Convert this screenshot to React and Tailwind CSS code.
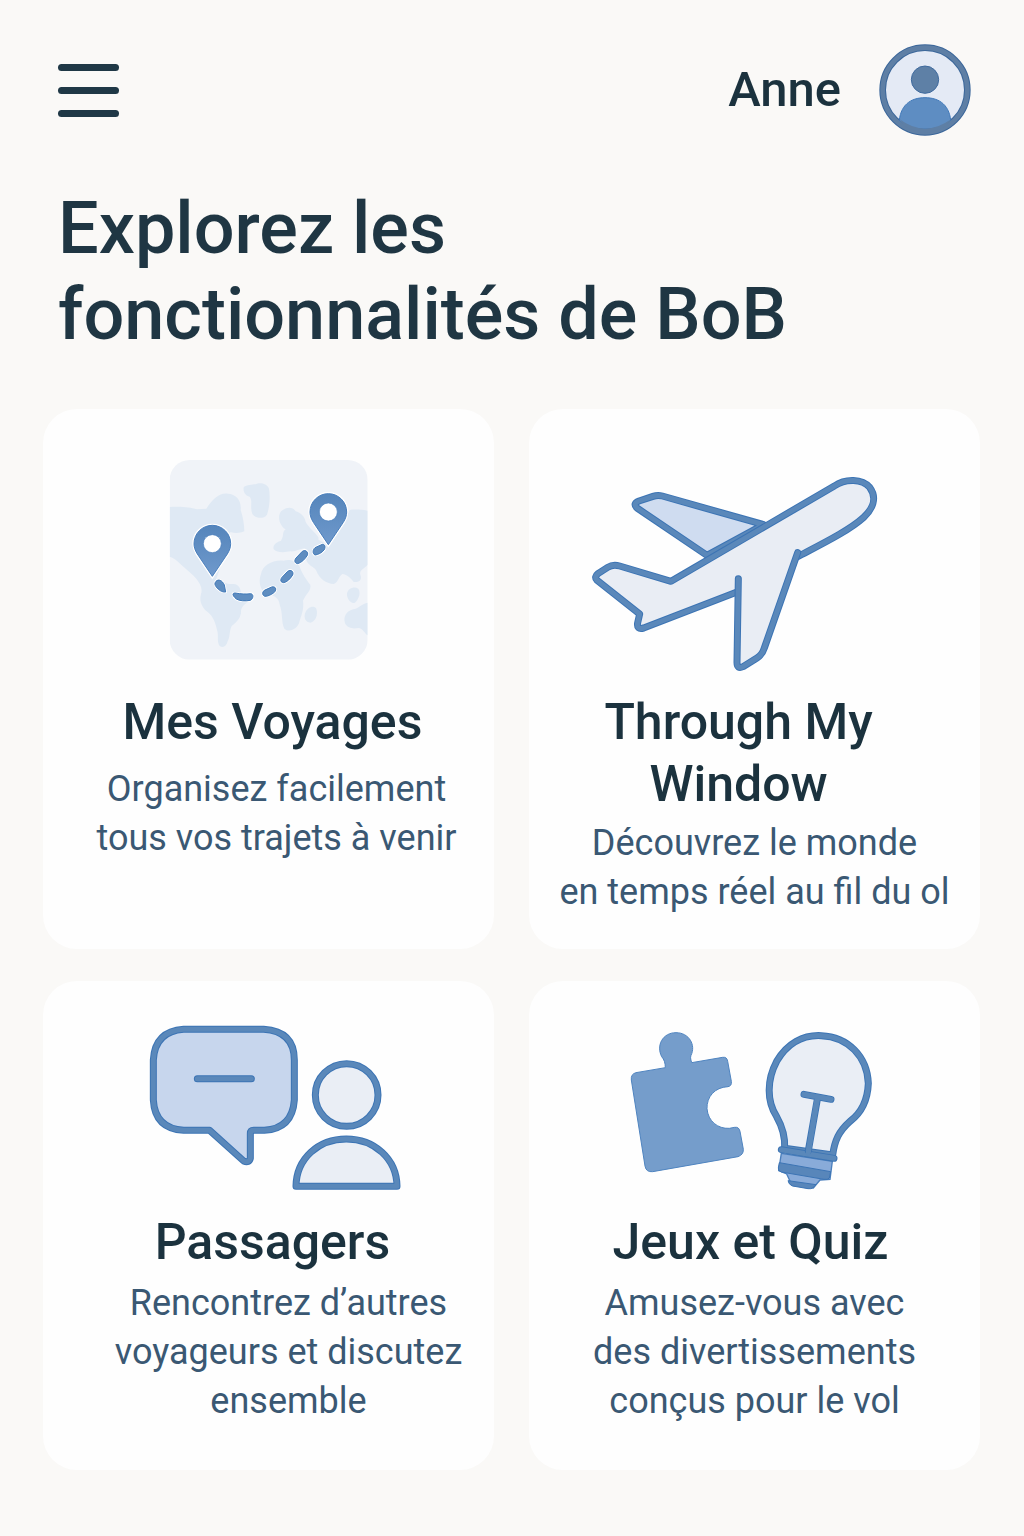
import React from "react";

const EDGE = "#3c74b4";
const CORE = "#5a88ba";

/* Outline with a slightly darker rim, as used by every illustration. */
function Outline({ d, width = 21, fill = "none" }) {
  return (
    <g strokeLinecap="round" strokeLinejoin="round">
      <path d={d} fill={fill} stroke={EDGE} strokeWidth={width} />
      <path d={d} fill="none" stroke={CORE} strokeWidth={width - 6} />
    </g>
  );
}

function Pin({ x, y }) {
  const d =
    "M0 0L-45 -67C-52 -78 -55 -88 -55 -98A55 55 0 1 1 55 -98C55 -88 52 -78 45 -67Z";
  return (
    <g transform={`translate(${x} ${y})`}>
      <path d={d} fill="#fff" stroke="#fff" strokeWidth="10" />
      <path d={d} fill="url(#pinFill)" stroke="#4a7fbd" strokeWidth="3" />
      <circle cy="-98" r="27" fill="#fff" stroke="#4a7fbd" strokeWidth="2" />
    </g>
  );
}

const DASHES = [
  "M169 394C176 386 188 391 194 405L198 426C186 427 177 420 170 411C165 405 164 400 169 394Z",
  "M226 429C244 432 258 433 273 431C283 432 281 447 272 451C256 454 240 453 230 447C219 438 216 429 226 429Z",
  "M314 421L336 411C348 408 352 418 344 427C334 435 324 439 316 439C307 436 307 427 314 421Z",
  "M366 383L384 364C394 357 403 365 399 375C391 388 382 396 372 398C363 397 361 391 366 383Z",
  "M409 324L428 304C438 297 447 307 443 316C435 329 425 338 414 341C405 340 403 332 409 324Z",
  "M466 293L488 283C496 282 498 291 494 299C486 309 475 314 466 315C458 311 459 299 466 293Z",
];

function MapArt({ className }) {
  return (
    <svg viewBox="-182 -3 1020 726" className={className} aria-hidden="true">
      <defs>
        <linearGradient id="pinFill" x1="0" y1="0" x2="0" y2="1">
          <stop offset="0" stopColor="#5585bb" />
          <stop offset="1" stopColor="#6f99cc" />
        </linearGradient>
        <clipPath id="mapClip">
          <rect x="30" y="30" width="594" height="599" rx="60" />
        </clipPath>
      </defs>
      <g clipPath="url(#mapClip)">
        <rect x="30" y="30" width="594" height="599" fill="#f0f3f8" />
        <g fill="#dfe9f4">
          <path d="M30 171C70 169 90 172 112 178L140 176C158 150 176 128 204 131C230 132 246 152 243 180C250 200 254 225 254 244C240 250 225 250 212 246L200 300L168 392C190 392 200 404 220 402C238 400 246 420 244 440C262 440 276 444 272 452C256 460 242 470 244 490C240 510 226 520 216 528C208 544 212 560 204 574C200 590 190 594 180 588C170 574 178 556 172 540C168 520 160 498 144 486C126 472 118 452 124 432C130 415 120 398 108 384C92 366 70 350 58 338C48 328 38 322 30 320Z" />
          <path d="M252 112C262 102 280 106 292 101C306 98 322 102 328 116C332 140 330 170 322 194C312 208 288 206 278 192C270 170 280 152 270 140C258 136 250 128 252 112Z" />
          <path d="M364 184C378 172 398 168 408 184C420 186 436 200 438 216C446 232 470 250 476 262C480 280 460 300 446 296C430 290 410 306 392 304C374 308 350 308 342 298C338 284 352 276 364 272C374 258 366 246 378 238C360 228 352 200 364 184Z" />
          <path d="M624 182C600 178 584 178 570 180L552 220L505 284L438 250L436 314C440 350 462 346 470 362C478 386 500 400 522 402C536 398 536 380 548 372C562 374 574 384 582 396C600 398 608 388 602 374C598 360 614 356 624 344Z" />
          <path d="M304 372C308 346 340 328 372 332C392 326 414 334 420 350C426 368 440 390 452 404C456 422 438 432 430 452C434 480 424 496 418 520C410 540 386 548 374 536C364 514 370 490 360 464C358 446 346 436 326 436C304 426 294 398 304 372Z" />
          <path d="M436 490C442 472 462 464 470 476C476 494 468 514 452 518C438 518 432 504 436 490Z" />
          <path d="M562 430C566 414 584 408 596 416C604 428 598 446 586 458C574 464 560 446 562 430Z" />
          <path d="M624 458C608 460 596 476 580 478C560 484 550 500 556 520C566 538 584 536 598 534C610 536 616 552 624 556Z" />
        </g>
      </g>
      {DASHES.map((d) => (
        <g key={d} strokeLinejoin="round">
          <path d={d} fill="#fff" stroke="#fff" strokeWidth="8" />
          <path d={d} fill="#5f8dc0" stroke="#3f78b8" strokeWidth="3" />
        </g>
      ))}
      <Pin x={158} y={379} />
      <Pin x={506} y={284} />
    </svg>
  );
}

function PlaneArt({ className }) {
  return (
    <svg viewBox="14 -33 1020 726" className={className} aria-hidden="true">
      <Outline
        fill="#cfdcf0"
        d="M550 194L246 108Q232 104 218 109L176 123Q156 131 170 144L380 286Z"
      />
      <path
        fill="#e9edf4"
        d="M272 364L762 78C800 52 850 58 872 86C890 118 872 150 846 176C800 216 720 254 652 286L554 562Q548 580 530 592L488 620Q470 628 470 608L470 396L190 504Q170 508 174 486L178 464L50 362Q38 352 54 341L82 324Q98 312 118 318Z"
      />
      <Outline d="M470 396L190 504Q168 510 172 488L178 462L50 361Q40 351 54 340L82 322Q98 312 118 318L272 364L762 78C796 54 846 56 868 82C892 114 876 148 850 172C806 212 724 252 652 290" />
      <Outline d="M474 356L470 608Q470 628 488 620L530 594Q546 584 552 564L652 278" />
    </svg>
  );
}

function ChatArt({ className }) {
  return (
    <svg viewBox="-122 33 1020 570" className={className} aria-hidden="true">
      <Outline
        fill="#c7d6ed"
        d="M132 58H372Q464 64 464 150V270Q458 356 374 361H342Q332 361 332 371V445Q328 460 312 453L210 361H132Q46 356 41 270V150Q46 64 132 58Z"
      />
      <Outline d="M173 206H335" />
      <circle cx="621" cy="255" r="94" fill="#eaeef5" stroke={EDGE} strokeWidth="21" />
      <circle cx="621" cy="255" r="94" fill="none" stroke={CORE} strokeWidth="15" />
      <Outline
        fill="#eaeef5"
        d="M469 529C470 446 536 387 620 387S771 446 772 529Z"
      />
    </svg>
  );
}

function GamesArt({ className }) {
  return (
    <svg viewBox="-105 3 1020 570" className={className} aria-hidden="true">
      <path
        fill="#759dcb"
        stroke="#4f84c0"
        strokeWidth="3"
        strokeLinejoin="round"
        d="M136 143C136 128 132 118 125 110C108 76 128 38 168 38C208 38 228 76 213 106C210 114 213 120 215 128L308 112Q321 110 323 124L334 184Q336 198 324 200C284 202 260 230 261 266C264 304 294 327 328 325L344 322Q357 320 360 334L370 388Q371 404 354 410L98 455Q78 457 75 438L34 180Q32 162 48 158Z"
      />
      <path
        fill="#89abd9"
        stroke="#4a7fbd"
        strokeWidth="4"
        d="M484 400L637 424L630 478L600 480L580 504L516 496L500 462L476 452Z"
      />
      <path
        fill="#5886ba"
        stroke={EDGE}
        strokeWidth="3"
        strokeLinejoin="round"
        d="M478 428L632 455L628 474Q624 480 612 478L484 456Q474 452 475 444Z"
      />
      <path
        fill="#5886ba"
        stroke={EDGE}
        strokeWidth="3"
        d="M504 482L588 494L578 504Q573 507 564 506L518 498Q506 494 504 482Z"
      />
      <Outline
        fill="#eaeef5"
        d="M494 385C496 345 486 318 470 290C440 244 440 180 470 124C502 70 550 44 604 47C684 50 742 110 745 190C743 240 722 280 690 304C656 334 644 362 638 405Z"
      />
      <Outline d="M484 389L642 415" />
      <Outline d="M552 223L633 238" />
      <Outline d="M592 238L565 392" />
      <path
        d="M552 223L633 238M592 232L565 398"
        fill="none"
        stroke={CORE}
        strokeWidth="15"
        strokeLinecap="round"
      />
    </svg>
  );
}

function Avatar() {
  return (
    <svg viewBox="0 0 276 276" className="size-[92px]" aria-hidden="true">
      <defs>
        <clipPath id="avatarClip">
          <circle cx="138" cy="138" r="120" />
        </clipPath>
      </defs>
      <circle cx="138" cy="138" r="127" fill="#e4eaf5" stroke="#3a669a" strokeWidth="20" />
      <circle cx="138" cy="138" r="127" fill="none" stroke="#5e7fa5" strokeWidth="14" />
      <g clipPath="url(#avatarClip)">
        <path
          d="M60 240C62 184 94 161 138 161S214 184 216 240L190 248Q138 262 84 248Z"
          fill="#5e8dc2"
          stroke="#3f78b8"
          strokeWidth="3"
        />
      </g>
      <path d="M62 226Q138 282 216 226L200 246Q138 284 76 246Z" fill="#5e7fa5" />
      <circle cx="138" cy="107" r="41" fill="#5e80a6" stroke="#3f6a9e" strokeWidth="3" />
    </svg>
  );
}

const FEATURES = [
  {
    title: ["Mes Voyages"],
    lines: ["Organisez facilement", "tous vos trajets à venir"],
    Art: MapArt,
    card: "pb-8",
    titleClass: "pl-2",
    text: "mt-3 pl-4",
  },
  {
    title: ["Through My", "Window"],
    lines: ["Découvrez le monde", "en temps réel au fil du ol"],
    Art: PlaneArt,
    card: "pb-8",
    titleClass: "pr-8",
    text: "mt-1",
  },
  {
    title: ["Passagers"],
    lines: ["Rencontrez d’autres", "voyageurs et discutez", "ensemble"],
    Art: ChatArt,
    card: "pb-11",
    titleClass: "pl-2",
    text: "mt-1.5 pl-10",
  },
  {
    title: ["Jeux et Quiz"],
    lines: ["Amusez-vous avec", "des divertissements", "conçus pour le vol"],
    Art: GamesArt,
    card: "pb-11",
    titleClass: "pr-2",
    text: "mt-1.5",
  },
];

function FeatureCard({ title, lines, Art, card, titleClass, text }) {
  return (
    <a
      href="#"
      className={`flex flex-col items-center rounded-[34px] bg-[#fefefe] pt-10 text-center ${card}`}
    >
      <Art className="h-auto w-[340px] max-w-full" />
      <h2
        className={`text-[50px] leading-[62px] font-medium whitespace-nowrap text-[#1b323e] ${titleClass}`}
      >
        {title.map((line) => (
          <span key={line} className="block">
            {line}
          </span>
        ))}
      </h2>
      <p
        className={`text-[36px] leading-[49px] whitespace-nowrap text-[#3a5873] ${text}`}
      >
        {lines.map((line) => (
          <span key={line} className="block">
            {line}
          </span>
        ))}
      </p>
    </a>
  );
}

export default function App() {
  return (
    <div className="min-h-screen bg-[#faf9f7] pt-11 pr-11 pb-16 pl-[43px] font-['Roboto','Liberation_Sans',sans-serif]">
      <header className="flex items-center justify-between pr-[9px] pl-[15px]">
        <button type="button" aria-label="Menu" className="flex flex-col gap-4">
          <span className="h-[7px] w-[61px] rounded-full bg-[#1f3846]" />
          <span className="h-[7px] w-[61px] rounded-full bg-[#1f3846]" />
          <span className="h-[7px] w-[61px] rounded-full bg-[#1f3846]" />
        </button>
        <button type="button" className="flex items-center gap-[38px]">
          <span className="text-[49px] leading-[60px] text-[#1b323e] font-medium">
            Anne
          </span>
          <Avatar />
        </button>
      </header>
      <h1 className="mt-[50px] pl-[15px] text-[72px] leading-[86px] font-medium whitespace-nowrap text-[#1f3643]">
        <span className="block">Explorez les</span>
        <span className="block">fonctionnalités de BoB</span>
      </h1>
      <main className="mt-[51px] grid grid-cols-2 gap-x-[35px] gap-y-8">
        {FEATURES.map((feature) => (
          <FeatureCard key={feature.title[0]} {...feature} />
        ))}
      </main>
    </div>
  );
}
